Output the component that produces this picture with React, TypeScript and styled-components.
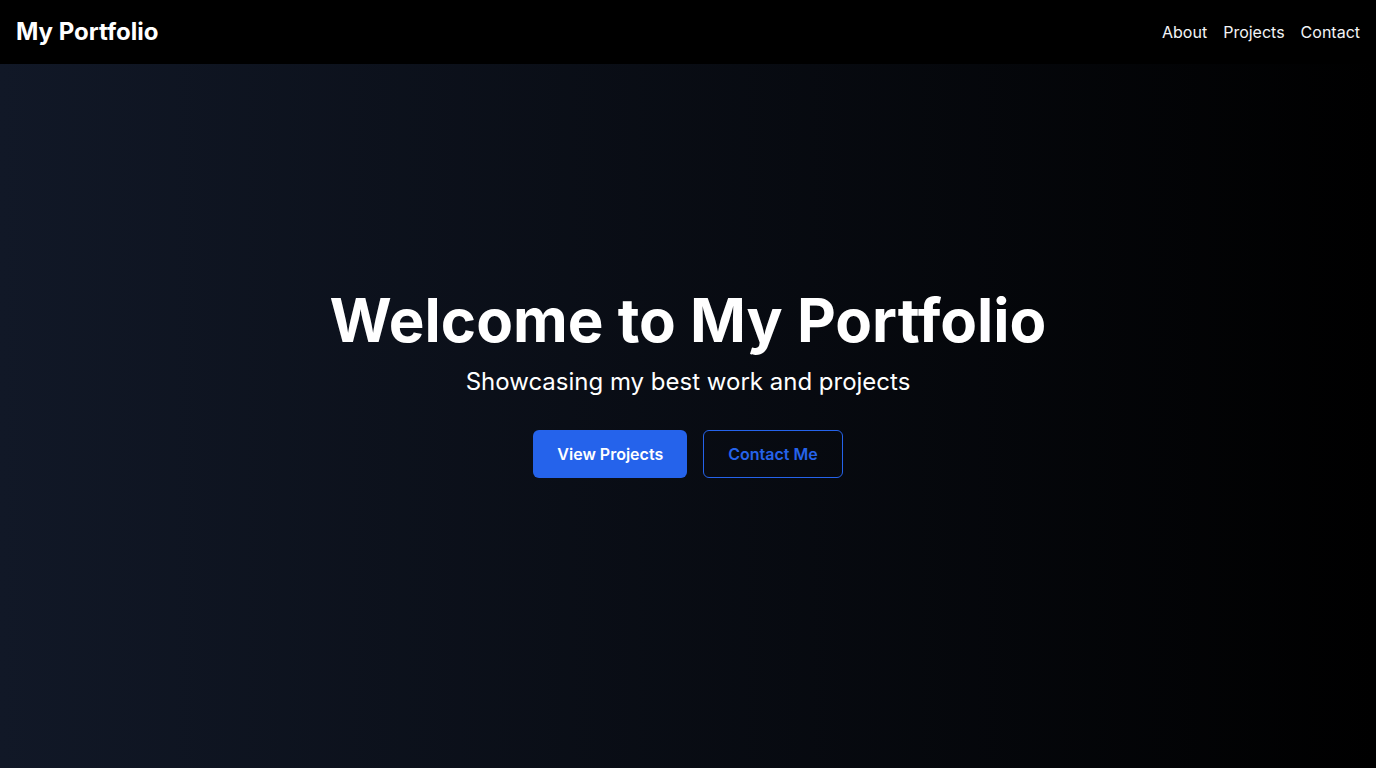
import React from "react";
import styled, { createGlobalStyle } from "styled-components";

const GlobalStyle = createGlobalStyle`
  * { box-sizing: border-box; }
  html, body { margin: 0; padding: 0; }
  body {
    font-family: Inter, "Noto Sans", "Liberation Sans", sans-serif;
    background: #000;
    color: #fff;
  }
`;

const Header = styled.header`
  position: fixed;
  top: 0;
  left: 0;
  right: 0;
  height: 64px;
  padding: 0 16px;
  background: #000;
  display: flex;
  align-items: center;
  justify-content: space-between;
  z-index: 10;
`;

const Brand = styled.h1`
  margin: 0;
  font-size: 24px;
  line-height: 32px;
  font-weight: 700;
  color: #fff;
`;

const Nav = styled.nav`
  display: flex;
  gap: 16px;
`;

const NavLink = styled.a`
  color: #f3f4f6;
  text-decoration: none;
  font-size: 16px;
  line-height: 24px;
`;

const Hero = styled.section`
  height: 768px;
  background: linear-gradient(to right, #111827, #000);
  display: flex;
  flex-direction: column;
  align-items: center;
  justify-content: center;
  text-align: center;
`;

const Title = styled.h2`
  margin: 0 0 16px;
  font-size: 60px;
  line-height: 60px;
  font-weight: 700;
  color: #fff;
`;

const Subtitle = styled.p`
  margin: 0 0 32px;
  font-size: 24px;
  line-height: 32px;
  color: #fff;
`;

const Actions = styled.div`
  display: flex;
  gap: 16px;
`;

const Button = styled.a<{ $variant: "solid" | "outline" }>`
  display: inline-flex;
  align-items: center;
  justify-content: center;
  height: 48px;
  padding: 0 24px;
  border-radius: 6px;
  font-size: 16px;
  line-height: 24px;
  font-weight: 600;
  text-decoration: none;
  border: ${(p) => (p.$variant === "solid" ? "none" : "1px solid #2563eb")};
  background: ${(p) => (p.$variant === "solid" ? "#2563eb" : "transparent")};
  color: ${(p) => (p.$variant === "solid" ? "#fff" : "#2563eb")};
`;

export default function App() {
  return (
    <>
      <GlobalStyle />
      <Header>
        <Brand>My Portfolio</Brand>
        <Nav>
          <NavLink href="#about">About</NavLink>
          <NavLink href="#projects">Projects</NavLink>
          <NavLink href="#contact">Contact</NavLink>
        </Nav>
      </Header>
      <Hero>
        <Title>Welcome to My Portfolio</Title>
        <Subtitle>Showcasing my best work and projects</Subtitle>
        <Actions>
          <Button $variant="solid" href="#projects">View Projects</Button>
          <Button $variant="outline" href="#contact">Contact Me</Button>
        </Actions>
      </Hero>
    </>
  );
}
